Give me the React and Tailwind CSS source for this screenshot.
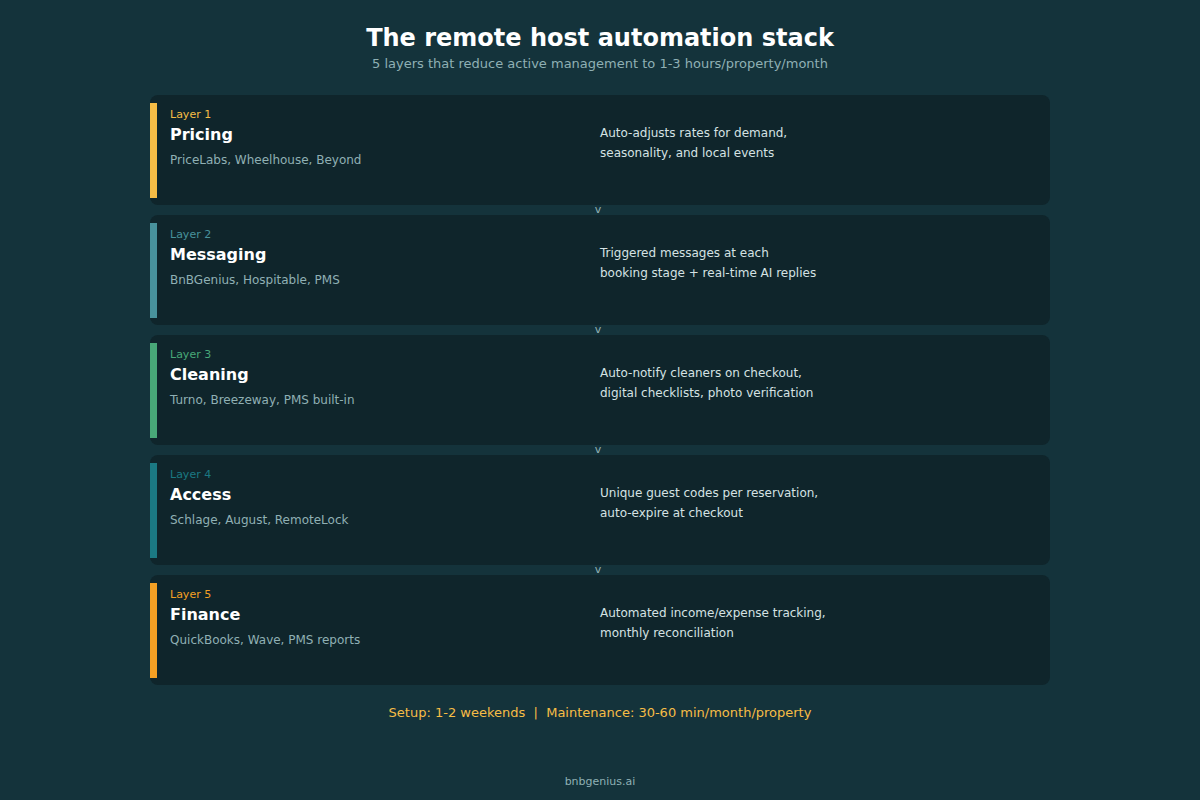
const layers = [
  { n: 1, title: "Pricing", tools: "PriceLabs, Wheelhouse, Beyond", desc: ["Auto-adjusts rates for demand,", "seasonality, and local events"], bar: "bg-[#f6bd46]", text: "text-[#f6bd46]" },
  { n: 2, title: "Messaging", tools: "BnBGenius, Hospitable, PMS", desc: ["Triggered messages at each", "booking stage + real-time AI replies"], bar: "bg-[#48929c]", text: "text-[#48929c]" },
  { n: 3, title: "Cleaning", tools: "Turno, Breezeway, PMS built-in", desc: ["Auto-notify cleaners on checkout,", "digital checklists, photo verification"], bar: "bg-[#48a878]", text: "text-[#48a878]" },
  { n: 4, title: "Access", tools: "Schlage, August, RemoteLock", desc: ["Unique guest codes per reservation,", "auto-expire at checkout"], bar: "bg-[#1b7983]", text: "text-[#1b7983]" },
  { n: 5, title: "Finance", tools: "QuickBooks, Wave, PMS reports", desc: ["Automated income/expense tracking,", "monthly reconciliation"], bar: "bg-[#f4a024]", text: "text-[#f4a024]" },
];

export default function App() {
  return (
    <div
      className="w-[1200px] h-[800px] bg-[#14333b] flex flex-col items-center"
      style={{ fontFamily: '"DejaVu Sans", sans-serif' }}
    >
      <h1 className="mt-[23px] text-[24px] leading-[30px] font-bold text-white">The remote host automation stack</h1>
      <p className="mt-[2px] text-[13px] leading-[18px] text-[#8fb0b4]">5 layers that reduce active management to 1-3 hours/property/month</p>

      <div className="mt-[22px] w-[900px] flex flex-col">
        {layers.map((l, i) => (
          <div key={l.n}>
            <div className="h-[110px] bg-[#0f252b] rounded-lg flex py-2">
              <div className={`w-[7px] h-[95px] ${l.bar}`}></div>
              <div className="w-[443px] pl-[13px] pt-[4px]">
                <div className={`text-[11px] leading-[16px] ${l.text}`}>Layer {l.n}</div>
                <div className="mt-[1px] text-[16px] leading-[22px] font-bold text-white">{l.title}</div>
                <div className="mt-[6px] text-[12px] leading-[16px] text-[#8fb0b4]">{l.tools}</div>
              </div>
              <div className="pt-[20px] text-[12px] leading-[20px] text-[#d5e2e3]">
                <div>{l.desc[0]}</div>
                <div>{l.desc[1]}</div>
              </div>
            </div>
            {i < 4 && (
              <div className="h-[10px] flex justify-center text-[11px] leading-[10px] text-[#8fb0b4] pr-[4px]">v</div>
            )}
          </div>
        ))}
      </div>

      <p className="mt-[19px] text-[13px] leading-[18px] text-[#f6bd46] whitespace-pre">Setup: 1-2 weekends  |  Maintenance: 30-60 min/month/property</p>
      <p className="mt-auto mb-[10px] text-[11px] leading-[16px] text-[#8fb0b4]">bnbgenius.ai</p>
    </div>
  );
}
